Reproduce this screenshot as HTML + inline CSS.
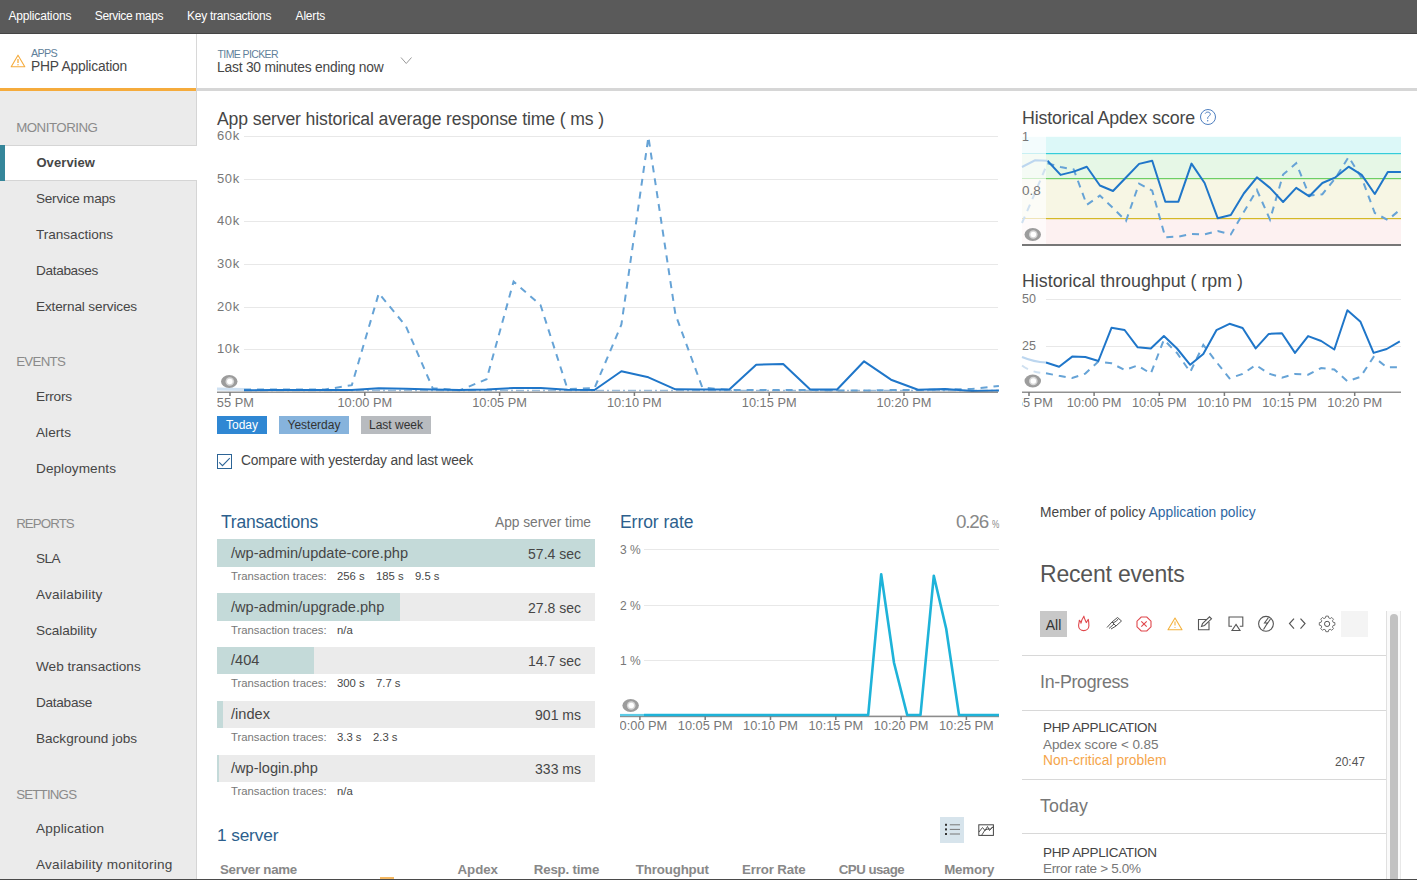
<!DOCTYPE html>
<html><head><meta charset="utf-8">
<style>
*{box-sizing:border-box;margin:0;padding:0}
html,body{width:1417px;height:880px;overflow:hidden;background:#fff;font-family:"Liberation Sans",sans-serif;color:#333}
.t{position:absolute;line-height:1;white-space:nowrap}
.abs{position:absolute}
</style></head><body>
<svg class="abs" style="left:0;top:0" width="1417" height="880" viewBox="0 0 1417 880">
<line x1="244" y1="136.5" x2="998" y2="136.5" stroke="#e8e8e8" stroke-width="1"/>
<line x1="244" y1="179.5" x2="998" y2="179.5" stroke="#e8e8e8" stroke-width="1"/>
<line x1="244" y1="221.5" x2="998" y2="221.5" stroke="#e8e8e8" stroke-width="1"/>
<line x1="244" y1="264.5" x2="998" y2="264.5" stroke="#e8e8e8" stroke-width="1"/>
<line x1="244" y1="307.5" x2="998" y2="307.5" stroke="#e8e8e8" stroke-width="1"/>
<line x1="244" y1="349.5" x2="998" y2="349.5" stroke="#e8e8e8" stroke-width="1"/>
<polyline points="244.0,390.5 271.0,390.5 297.9,390.5 324.9,390.5 351.8,390.5 378.8,390.5 405.8,390.5 432.7,390.5 459.7,390.5 486.6,390.5 513.6,390.5 540.6,390.5 567.5,390.5 594.5,390.5 621.4,390.5 648.4,390.5 675.4,390.5 702.3,390.5 729.3,390.5 756.2,390.5 783.2,390.5 810.2,390.5 837.1,390.5 864.1,390.5 891.0,390.5 918.0,390.5 945.0,390.5 971.9,390.5 998.9,390.5" fill="none" stroke="#9bbbd8" stroke-width="1.5" stroke-dasharray="8,3,2,3"/>
<polyline points="244.0,389.5 271.0,389.5 297.9,389.5 324.9,389.5 351.8,385.2 378.8,293.3 405.8,326.0 432.7,388.2 459.7,390.3 486.6,379.3 513.6,281.5 540.6,305.2 567.5,389.0 594.5,388.2 621.4,324.5 648.4,137.0 675.4,314.3 702.3,387.5 729.3,390.0 756.2,390.0 783.2,390.0 810.2,390.0 837.1,390.5 864.1,390.5 891.0,390.0 918.0,390.0 945.0,389.5 971.9,389.0 998.9,386.0" fill="none" stroke="#66a3d6" stroke-width="2" stroke-dasharray="7,6"/>
<polyline points="244.0,390.3 271.0,390.0 297.9,390.0 324.9,390.0 351.8,390.0 378.8,388.2 405.8,388.8 432.7,389.5 459.7,390.0 486.6,389.5 513.6,388.0 540.6,388.0 567.5,389.7 594.5,390.0 621.4,371.2 648.4,377.3 675.4,389.3 702.3,389.5 729.3,389.5 756.2,364.7 783.2,364.0 810.2,389.5 837.1,389.5 864.1,361.3 891.0,379.7 918.0,389.8 945.0,389.0 971.9,391.0 998.9,390.5" fill="none" stroke="#1f76c9" stroke-width="2" stroke-linejoin="round"/>
<polyline points="217,389 244,389.5" fill="none" stroke="#cfe1f2" stroke-width="3"/>
<rect x="217" y="391.6" width="781" height="1.2" fill="#777"/>
<rect x="229.25" y="392" width="1.5" height="4" fill="#7a7a7a"/>
<rect x="364.05" y="392" width="1.5" height="4" fill="#7a7a7a"/>
<rect x="498.85" y="392" width="1.5" height="4" fill="#7a7a7a"/>
<rect x="633.65" y="392" width="1.5" height="4" fill="#7a7a7a"/>
<rect x="768.45" y="392" width="1.5" height="4" fill="#7a7a7a"/>
<rect x="903.25" y="392" width="1.5" height="4" fill="#7a7a7a"/>
<ellipse cx="229.25" cy="381.5" rx="8.25" ry="6.5" fill="#9c9c9c"/><circle cx="229.8" cy="381.5" r="4.3" fill="#d6d6d6"/><circle cx="229.8" cy="381.5" r="2.8" fill="#fff"/>
<rect x="1046" y="136.8" width="355" height="16.4" fill="#dcf8f8"/>
<rect x="1046" y="153.2" width="355" height="25" fill="#e6f7e6"/>
<rect x="1046" y="178.2" width="355" height="40.2" fill="#f7f6e4"/>
<rect x="1046" y="218.4" width="355" height="25.6" fill="#fdf1f1"/>
<rect x="1022" y="136.8" width="24" height="16.4" fill="#f3fcfd"/>
<rect x="1022" y="153.2" width="24" height="25" fill="#f5fbf5"/>
<rect x="1022" y="178.2" width="24" height="40.2" fill="#fcfcf7"/>
<rect x="1022" y="218.4" width="24" height="25.6" fill="#fefafa"/>
<rect x="1046" y="153" width="355" height="1.2" fill="#34cdda"/>
<rect x="1046" y="178" width="355" height="1.2" fill="#6ccf64"/>
<rect x="1046" y="218" width="355" height="1.2" fill="#d4b926"/>
<rect x="1022" y="153" width="24" height="1" fill="#c8f0f3"/>
<rect x="1022" y="178" width="24" height="1" fill="#cdeec9"/>
<rect x="1022" y="218" width="24" height="1" fill="#eee4b8"/>
<polyline points="1047.5,163.2 1060.6,167.0 1073.7,169.5 1086.8,204.8 1099.9,195.6 1113.0,208.0 1126.0,221.0 1139.1,183.6 1152.2,190.7 1165.3,237.3 1178.4,236.6 1191.5,234.0 1204.6,234.4 1217.7,231.0 1230.8,234.4 1243.8,212.0 1256.9,190.0 1270.0,219.6 1283.1,174.5 1296.2,163.2 1309.3,195.6 1322.4,194.2 1335.5,178.0 1348.6,157.0 1361.7,178.0 1374.8,213.0 1387.8,220.0 1400.9,209.0" fill="none" stroke="#66a3d6" stroke-width="2" stroke-dasharray="7,6"/>
<polyline points="1047.5,160.8 1060.6,174.9 1073.7,171.6 1086.8,166.7 1099.9,185.5 1113.0,191.0 1126.0,177.5 1139.1,163.9 1152.2,160.8 1165.3,201.7 1178.4,201.7 1191.5,163.6 1204.6,183.0 1217.7,218.2 1230.8,215.0 1243.8,193.5 1256.9,177.3 1270.0,187.9 1283.1,202.0 1296.2,187.9 1309.3,196.3 1322.4,183.0 1335.5,177.3 1348.6,166.7 1361.7,174.9 1374.8,194.0 1387.8,172.0 1400.9,172.0" fill="none" stroke="#1f76c9" stroke-width="2" stroke-linejoin="round"/>
<polyline points="1022,167 1035,160.3 1047.5,160.8" fill="none" stroke="#bcd6ef" stroke-width="2"/>
<polyline points="1022,223 1035,193 1047.5,163.2" fill="none" stroke="#cfe0f0" stroke-width="2" stroke-dasharray="7,6"/>
<rect x="1022" y="244" width="379" height="2" fill="#777"/>
<ellipse cx="1032.75" cy="234.5" rx="8.25" ry="6.5" fill="#9c9c9c"/><circle cx="1033.3" cy="234.5" r="4.3" fill="#d6d6d6"/><circle cx="1033.3" cy="234.5" r="2.8" fill="#fff"/>
<line x1="1046" y1="299.5" x2="1401" y2="299.5" stroke="#e8e8e8" stroke-width="1"/>
<line x1="1046" y1="346.5" x2="1401" y2="346.5" stroke="#e8e8e8" stroke-width="1"/>
<polyline points="1046.0,373.3 1059.1,375.8 1072.2,378.0 1085.3,373.6 1098.4,361.5 1111.5,363.3 1124.6,370.0 1137.7,365.5 1150.8,373.6 1163.9,339.7 1177.0,353.0 1190.2,372.0 1203.3,345.0 1216.4,362.0 1229.5,378.4 1242.6,373.9 1255.7,365.0 1268.8,373.6 1281.9,377.6 1295.0,373.9 1308.1,374.7 1321.2,368.0 1334.3,369.5 1347.4,381.3 1360.5,376.9 1373.6,356.9 1386.7,367.2 1399.8,367.2" fill="none" stroke="#66a3d6" stroke-width="2" stroke-dasharray="7,6"/>
<polyline points="1046.0,362.5 1059.1,366.7 1072.2,356.6 1085.3,357.0 1098.4,361.0 1111.5,327.8 1124.6,330.0 1137.7,347.3 1150.8,348.5 1163.9,336.0 1177.0,348.5 1190.2,364.8 1203.3,353.9 1216.4,330.2 1229.5,323.8 1242.6,328.0 1255.7,348.4 1268.8,333.9 1281.9,333.2 1295.0,352.9 1308.1,336.1 1321.2,341.0 1334.3,349.5 1347.4,310.2 1360.5,321.8 1373.6,352.9 1386.7,349.0 1399.8,341.3" fill="none" stroke="#1f76c9" stroke-width="2" stroke-linejoin="round"/>
<path d="M1022,357 Q1034,362 1046,362.5" fill="none" stroke="#bcd6ef" stroke-width="2"/>
<path d="M1022,365.5 Q1032,373 1046,373.3" fill="none" stroke="#cfe0f0" stroke-width="2" stroke-dasharray="7,6"/>
<rect x="1022" y="391.6" width="379" height="1.2" fill="#777"/>
<rect x="1028.25" y="392" width="1.5" height="4" fill="#7a7a7a"/>
<rect x="1093.35" y="392" width="1.5" height="4" fill="#7a7a7a"/>
<rect x="1158.55" y="392" width="1.5" height="4" fill="#7a7a7a"/>
<rect x="1223.65" y="392" width="1.5" height="4" fill="#7a7a7a"/>
<rect x="1288.85" y="392" width="1.5" height="4" fill="#7a7a7a"/>
<rect x="1353.95" y="392" width="1.5" height="4" fill="#7a7a7a"/>
<ellipse cx="1032.75" cy="381.0" rx="8.25" ry="6.5" fill="#9c9c9c"/><circle cx="1033.3" cy="381.0" r="4.3" fill="#d6d6d6"/><circle cx="1033.3" cy="381.0" r="2.8" fill="#fff"/>
<line x1="644" y1="549.5" x2="999" y2="549.5" stroke="#e8e8e8" stroke-width="1"/>
<line x1="644" y1="605.5" x2="999" y2="605.5" stroke="#e8e8e8" stroke-width="1"/>
<line x1="644" y1="660.5" x2="999" y2="660.5" stroke="#e8e8e8" stroke-width="1"/>
<rect x="620" y="715.6" width="379" height="1.6" fill="#8c8c8c"/>
<rect x="639.15" y="716" width="1.5" height="4" fill="#7a7a7a"/>
<rect x="704.45" y="716" width="1.5" height="4" fill="#7a7a7a"/>
<rect x="769.75" y="716" width="1.5" height="4" fill="#7a7a7a"/>
<rect x="835.05" y="716" width="1.5" height="4" fill="#7a7a7a"/>
<rect x="900.35" y="716" width="1.5" height="4" fill="#7a7a7a"/>
<rect x="965.65" y="716" width="1.5" height="4" fill="#7a7a7a"/>
<polyline points="620,715 644,715" fill="none" stroke="#5ccbe6" stroke-width="2.2"/>
<polyline points="644,715 868.2,715 881.2,574.2 894,662.8 907.2,715 920.5,715 933.8,575.7 946.2,628.8 959,715 999,715" fill="none" stroke="#1eb3d9" stroke-width="2.6" stroke-linejoin="round"/>
<ellipse cx="630.65" cy="705.5" rx="8.25" ry="6.5" fill="#9c9c9c"/><circle cx="631.1999999999999" cy="705.5" r="4.3" fill="#d6d6d6"/><circle cx="631.1999999999999" cy="705.5" r="2.8" fill="#fff"/>
</svg>
<div class="abs" style="left:0;top:0;width:1417px;height:33px;background:#5a5a5a"></div>
<div class="abs" style="left:0;top:33px;width:1417px;height:1px;background:#444"></div>
<span class="t" style="left:8.4px;top:10.3px;font-size:12px;color:#fff;;letter-spacing:-0.152px">Applications</span>
<span class="t" style="left:94.8px;top:10.3px;font-size:12px;color:#fff;;letter-spacing:-0.367px">Service maps</span>
<span class="t" style="left:187.1px;top:10.3px;font-size:12px;color:#fff;;letter-spacing:-0.295px">Key transactions</span>
<span class="t" style="left:295.6px;top:10.3px;font-size:12px;color:#fff;;letter-spacing:-0.198px">Alerts</span>
<div class="abs" style="left:196px;top:34px;width:1px;height:54px;background:#d8d8d8"></div>
<div class="abs" style="left:0;top:88px;width:196px;height:3px;background:#f5ab3c"></div>
<div class="abs" style="left:196px;top:88px;width:1221px;height:3px;background:#d6d6d6"></div>
<svg class="abs" style="left:10px;top:54px" width="16" height="14" viewBox="0 0 16 14"><path d="M8 1.2 L14.8 12.8 H1.2 Z" fill="none" stroke="#f5ab3c" stroke-width="1.1" stroke-linejoin="round"/><path d="M8 5 V9" stroke="#f5ab3c" stroke-width="1.3"/><circle cx="8" cy="10.8" r="0.7" fill="#f5ab3c"/></svg>
<span class="t" style="left:31px;top:48.2px;font-size:10.8px;color:#5f7f9a;;letter-spacing:-0.703px">APPS</span>
<span class="t" style="left:31px;top:59.7px;font-size:13.8px;color:#464646;;letter-spacing:-0.179px">PHP Application</span>
<span class="t" style="left:217.5px;top:48.7px;font-size:10.5px;color:#5f7f9a;;letter-spacing:-0.599px">TIME PICKER</span>
<span class="t" style="left:217px;top:60.5px;font-size:13.8px;color:#464646;;letter-spacing:-0.204px">Last 30 minutes ending now</span>
<svg class="abs" style="left:400px;top:56px" width="13" height="9" viewBox="0 0 13 9"><path d="M1 1.5 L6.25 7.5 L11.5 1.5" fill="none" stroke="#9a9a9a" stroke-width="1"/></svg>
<div class="abs" style="left:0;top:91px;width:196px;height:789px;background:#ebebeb"></div>
<div class="abs" style="left:196px;top:91px;width:1px;height:789px;background:#d5d5d5"></div>
<div class="abs" style="left:0;top:145px;width:197px;height:36px;background:#fff;border-top:1px solid #d5d5d5;border-bottom:1px solid #d5d5d5"></div>
<div class="abs" style="left:0;top:145px;width:5px;height:36px;background:#35869a"></div>
<span class="t" style="left:16.2px;top:121.3px;font-size:13.3px;color:#8a8a8a;;letter-spacing:-0.499px">MONITORING</span>
<span class="t" style="left:36.4px;top:155.9px;font-size:13px;color:#464646;font-weight:bold;letter-spacing:0.096px">Overview</span>
<span class="t" style="left:36px;top:191.5px;font-size:13.6px;color:#464646;;letter-spacing:-0.255px">Service maps</span>
<span class="t" style="left:36px;top:227.5px;font-size:13.6px;color:#464646;;letter-spacing:-0.027px">Transactions</span>
<span class="t" style="left:36px;top:263.5px;font-size:13.6px;color:#464646;;letter-spacing:-0.333px">Databases</span>
<span class="t" style="left:36px;top:299.5px;font-size:13.6px;color:#464646;;letter-spacing:-0.147px">External services</span>
<span class="t" style="left:16.2px;top:355.1px;font-size:13.3px;color:#8a8a8a;;letter-spacing:-0.701px">EVENTS</span>
<span class="t" style="left:36px;top:389.8px;font-size:13.6px;color:#464646;;letter-spacing:-0.169px">Errors</span>
<span class="t" style="left:36px;top:425.8px;font-size:13.6px;color:#464646;;letter-spacing:0.042px">Alerts</span>
<span class="t" style="left:36px;top:461.8px;font-size:13.6px;color:#464646;;letter-spacing:0.060px">Deployments</span>
<span class="t" style="left:16.2px;top:517.1px;font-size:13.3px;color:#8a8a8a;;letter-spacing:-0.921px">REPORTS</span>
<span class="t" style="left:36px;top:551.8px;font-size:13.6px;color:#464646;;letter-spacing:-0.568px">SLA</span>
<span class="t" style="left:36px;top:587.8px;font-size:13.6px;color:#464646;;letter-spacing:0.201px">Availability</span>
<span class="t" style="left:36px;top:623.8px;font-size:13.6px;color:#464646;;letter-spacing:-0.037px">Scalability</span>
<span class="t" style="left:36px;top:659.8px;font-size:13.6px;color:#464646;;letter-spacing:-0.005px">Web transactions</span>
<span class="t" style="left:36px;top:695.8px;font-size:13.6px;color:#464646;;letter-spacing:-0.275px">Database</span>
<span class="t" style="left:36px;top:731.8px;font-size:13.6px;color:#464646;;letter-spacing:-0.018px">Background jobs</span>
<span class="t" style="left:16.2px;top:787.5px;font-size:13.3px;color:#8a8a8a;;letter-spacing:-0.812px">SETTINGS</span>
<span class="t" style="left:36px;top:822.1px;font-size:13.6px;color:#464646;;letter-spacing:0.162px">Application</span>
<span class="t" style="left:36px;top:857.8px;font-size:13.6px;color:#464646;;letter-spacing:0.234px">Availability monitoring</span>
<span class="t" style="left:217px;top:110.7px;font-size:17.6px;color:#464646;;letter-spacing:-0.122px">App server historical average response time ( ms )</span>
<span class="t" style="left:217px;top:128.9px;font-size:13px;color:#777;letter-spacing:0.6px">60k</span>
<span class="t" style="left:217px;top:171.6px;font-size:13px;color:#777;letter-spacing:0.6px">50k</span>
<span class="t" style="left:217px;top:214.2px;font-size:13px;color:#777;letter-spacing:0.6px">40k</span>
<span class="t" style="left:217px;top:256.9px;font-size:13px;color:#777;letter-spacing:0.6px">30k</span>
<span class="t" style="left:217px;top:299.6px;font-size:13px;color:#777;letter-spacing:0.6px">20k</span>
<span class="t" style="left:217px;top:342.2px;font-size:13px;color:#777;letter-spacing:0.6px">10k</span>
<div class="abs" style="left:217px;top:395px;width:800px;height:20px;overflow:hidden">
<span class="t" style="left:13px;transform:translateX(-50%);top:1.8px;font-size:12.8px;color:#777;">9:55 PM</span>
<span class="t" style="left:147.8px;transform:translateX(-50%);top:1.8px;font-size:12.8px;color:#777;">10:00 PM</span>
<span class="t" style="left:282.6px;transform:translateX(-50%);top:1.8px;font-size:12.8px;color:#777;">10:05 PM</span>
<span class="t" style="left:417.4px;transform:translateX(-50%);top:1.8px;font-size:12.8px;color:#777;">10:10 PM</span>
<span class="t" style="left:552.2px;transform:translateX(-50%);top:1.8px;font-size:12.8px;color:#777;">10:15 PM</span>
<span class="t" style="left:687px;transform:translateX(-50%);top:1.8px;font-size:12.8px;color:#777;">10:20 PM</span>
</div>
<div class="abs" style="left:217px;top:416px;width:50px;height:18px;background:#2f87d3"></div>
<span class="t" style="left:242px;transform:translateX(-50%);top:419.2px;font-size:12px;color:#fff;">Today</span>
<div class="abs" style="left:279px;top:416px;width:70px;height:18px;background:#86b3dc"></div>
<span class="t" style="left:314px;transform:translateX(-50%);top:419.2px;font-size:12px;color:#333;">Yesterday</span>
<div class="abs" style="left:361px;top:416px;width:70px;height:18px;background:#b8bbbf"></div>
<span class="t" style="left:396px;transform:translateX(-50%);top:419.2px;font-size:12px;color:#333;">Last week</span>
<div class="abs" style="left:217px;top:454px;width:15px;height:15px;border:1px solid #2c6496;background:#fff"></div>
<svg class="abs" style="left:217px;top:454px" width="15" height="15" viewBox="0 0 15 15"><path d="M2.2 8.3 L5.5 11.6 L12.8 4.2" fill="none" stroke="#2c6496" stroke-width="1.1"/></svg>
<span class="t" style="left:241px;top:453.7px;font-size:13.8px;color:#464646;;letter-spacing:-0.138px">Compare with yesterday and last week</span>
<span class="t" style="left:1022px;top:110.3px;font-size:17.8px;color:#464646;;letter-spacing:-0.133px">Historical Apdex score</span>
<svg class="abs" style="left:1199px;top:108px" width="18" height="18" viewBox="0 0 18 18"><circle cx="9" cy="9" r="7.5" fill="none" stroke="#4f7fc0" stroke-width="1"/><path d="M6.2 5.6 C6.6 4.6 7.6 4.1 8.8 4.1 C10.3 4.1 11.3 5 11.3 6.2 C11.3 7.6 9.8 8 9 9 C8.7 9.4 8.7 10 8.7 10.8" fill="none" stroke="#4f7fc0" stroke-width="1"/><circle cx="8.7" cy="12.7" r="0.7" fill="#4f7fc0"/></svg>
<span class="t" style="left:1022px;top:130.8px;font-size:12.5px;color:#777;">1</span>
<span class="t" style="left:1022px;top:184.4px;font-size:13.5px;color:#777;">0.8</span>
<span class="t" style="left:1022px;top:272.8px;font-size:17.8px;color:#464646;;letter-spacing:0.022px">Historical throughput ( rpm )</span>
<span class="t" style="left:1022px;top:292.5px;font-size:12.5px;color:#777;">50</span>
<span class="t" style="left:1022px;top:339.8px;font-size:12.5px;color:#777;">25</span>
<div class="abs" style="left:1022px;top:395px;width:380px;height:20px;overflow:hidden">
<span class="t" style="left:7px;transform:translateX(-50%);top:1.8px;font-size:12.8px;color:#777;">9:55 PM</span>
<span class="t" style="left:72.09999999999991px;transform:translateX(-50%);top:1.8px;font-size:12.8px;color:#777;">10:00 PM</span>
<span class="t" style="left:137.29999999999995px;transform:translateX(-50%);top:1.8px;font-size:12.8px;color:#777;">10:05 PM</span>
<span class="t" style="left:202.4000000000001px;transform:translateX(-50%);top:1.8px;font-size:12.8px;color:#777;">10:10 PM</span>
<span class="t" style="left:267.5999999999999px;transform:translateX(-50%);top:1.8px;font-size:12.8px;color:#777;">10:15 PM</span>
<span class="t" style="left:332.70000000000005px;transform:translateX(-50%);top:1.8px;font-size:12.8px;color:#777;">10:20 PM</span>
</div>
<span class="t" style="left:221px;top:513.5px;font-size:17.5px;color:#2d5f8d;;letter-spacing:-0.211px">Transactions</span>
<span class="t" style="left:495px;top:515.7px;font-size:13.8px;color:#777;;letter-spacing:-0.042px">App server time</span>
<div class="abs" style="left:217px;top:539px;width:378px;height:28px;background:#ebebeb"></div>
<div class="abs" style="left:217px;top:539px;width:378px;height:28px;background:#c4dad9"></div>
<span class="t" style="left:231px;top:546.3px;font-size:14.6px;color:#464646;;letter-spacing:-0.027px">/wp-admin/update-core.php</span>
<span class="t" style="right:836px;top:546.8px;font-size:14px;color:#464646;">57.4 sec</span>
<span class="t" style="left:231px;top:570.8px;font-size:11.3px;color:#777;">Transaction traces:</span>
<span class="t" style="left:337px;top:570.8px;font-size:11.3px;color:#464646;">256 s</span>
<span class="t" style="left:376px;top:570.8px;font-size:11.3px;color:#464646;">185 s</span>
<span class="t" style="left:415px;top:570.8px;font-size:11.3px;color:#464646;">9.5 s</span>
<div class="abs" style="left:217px;top:593px;width:378px;height:28px;background:#ebebeb"></div>
<div class="abs" style="left:217px;top:593px;width:183px;height:28px;background:#c4dad9"></div>
<span class="t" style="left:231px;top:600.3px;font-size:14.6px;color:#464646;">/wp-admin/upgrade.php</span>
<span class="t" style="right:836px;top:600.8px;font-size:14px;color:#464646;">27.8 sec</span>
<span class="t" style="left:231px;top:624.8px;font-size:11.3px;color:#777;">Transaction traces:</span>
<span class="t" style="left:337px;top:624.8px;font-size:11.3px;color:#464646;">n/a</span>
<div class="abs" style="left:217px;top:647px;width:378px;height:27px;background:#ebebeb"></div>
<div class="abs" style="left:217px;top:647px;width:97px;height:27px;background:#c4dad9"></div>
<span class="t" style="left:231px;top:653.3px;font-size:14.6px;color:#464646;">/404</span>
<span class="t" style="right:836px;top:653.8px;font-size:14px;color:#464646;">14.7 sec</span>
<span class="t" style="left:231px;top:677.8px;font-size:11.3px;color:#777;">Transaction traces:</span>
<span class="t" style="left:337px;top:677.8px;font-size:11.3px;color:#464646;">300 s</span>
<span class="t" style="left:376px;top:677.8px;font-size:11.3px;color:#464646;">7.7 s</span>
<div class="abs" style="left:217px;top:701px;width:378px;height:27px;background:#ebebeb"></div>
<div class="abs" style="left:217px;top:701px;width:6px;height:27px;background:#c4dad9"></div>
<span class="t" style="left:231px;top:707.3px;font-size:14.6px;color:#464646;">/index</span>
<span class="t" style="right:836px;top:707.8px;font-size:14px;color:#464646;">901 ms</span>
<span class="t" style="left:231px;top:731.8px;font-size:11.3px;color:#777;">Transaction traces:</span>
<span class="t" style="left:337px;top:731.8px;font-size:11.3px;color:#464646;">3.3 s</span>
<span class="t" style="left:373px;top:731.8px;font-size:11.3px;color:#464646;">2.3 s</span>
<div class="abs" style="left:217px;top:755px;width:378px;height:27px;background:#ebebeb"></div>
<div class="abs" style="left:217px;top:755px;width:2px;height:27px;background:#c4dad9"></div>
<span class="t" style="left:231px;top:761.3px;font-size:14.6px;color:#464646;">/wp-login.php</span>
<span class="t" style="right:836px;top:761.8px;font-size:14px;color:#464646;">333 ms</span>
<span class="t" style="left:231px;top:785.8px;font-size:11.3px;color:#777;">Transaction traces:</span>
<span class="t" style="left:337px;top:785.8px;font-size:11.3px;color:#464646;">n/a</span>
<span class="t" style="left:620px;top:513.9px;font-size:17.5px;color:#2d5f8d;;letter-spacing:-0.051px">Error rate</span>
<span class="t" style="left:955.9px;top:513.2px;font-size:18.8px;color:#888;;letter-spacing:-1.091px">0.26</span>
<span class="t" style="left:991.5px;top:519.2px;font-size:11px;color:#888;transform:scaleX(0.75);transform-origin:left">%</span>
<span class="t" style="left:620px;top:543.7px;font-size:12px;color:#777;">3 %</span>
<span class="t" style="left:620px;top:599.9px;font-size:12px;color:#777;">2 %</span>
<span class="t" style="left:620px;top:655.2px;font-size:12px;color:#777;">1 %</span>
<div class="abs" style="left:620px;top:719px;width:380px;height:20px;overflow:hidden">
<span class="t" style="left:19.899999999999977px;transform:translateX(-50%);top:1.3px;font-size:12.8px;color:#777;">10:00 PM</span>
<span class="t" style="left:85.20000000000005px;transform:translateX(-50%);top:1.3px;font-size:12.8px;color:#777;">10:05 PM</span>
<span class="t" style="left:150.5px;transform:translateX(-50%);top:1.3px;font-size:12.8px;color:#777;">10:10 PM</span>
<span class="t" style="left:215.79999999999995px;transform:translateX(-50%);top:1.3px;font-size:12.8px;color:#777;">10:15 PM</span>
<span class="t" style="left:281.1px;transform:translateX(-50%);top:1.3px;font-size:12.8px;color:#777;">10:20 PM</span>
<span class="t" style="left:346.4px;transform:translateX(-50%);top:1.3px;font-size:12.8px;color:#777;">10:25 PM</span>
</div>
<span class="t" style="left:217px;top:826.8px;font-size:17.3px;color:#2d5f8d;;letter-spacing:-0.142px">1 server</span>
<div class="abs" style="left:940px;top:817px;width:24px;height:26px;background:#d7e4ec"></div>
<svg class="abs" style="left:942px;top:821px" width="20" height="18" viewBox="0 0 20 18"><g fill="#333"><rect x="3" y="2.8" width="2" height="2"/><rect x="3" y="7.4" width="2" height="2"/><rect x="3" y="12" width="2" height="2"/></g><g stroke="#777" stroke-width="1"><line x1="7.8" y1="3.8" x2="18" y2="3.8"/><line x1="7.8" y1="8.4" x2="18" y2="8.4"/><line x1="7.8" y1="13" x2="18" y2="13"/></g></svg>
<svg class="abs" style="left:976px;top:821px" width="20" height="16" viewBox="0 0 20 16"><rect x="2.8" y="3.8" width="14.6" height="10.6" fill="none" stroke="#444" stroke-width="1"/><path d="M3 11 L6.5 6.5 L9 9.5 L11.5 5.5 L13.5 9.5 L16.5 6 L17.5 7" fill="none" stroke="#444" stroke-width="0.9"/><path d="M5.5 14.5 L9 9 L12 8 L14.5 8 L17.4 5.5" fill="none" stroke="#444" stroke-width="0.9"/></svg>
<span class="t" style="left:220px;top:863.4px;font-size:13.3px;color:#888;font-weight:bold;letter-spacing:-0.259px">Server name</span>
<span class="t" style="left:457.5px;top:863.4px;font-size:13.3px;color:#888;font-weight:bold;letter-spacing:-0.048px">Apdex</span>
<span class="t" style="left:533.75px;top:863.4px;font-size:13.3px;color:#888;font-weight:bold;letter-spacing:-0.185px">Resp. time</span>
<span class="t" style="left:635.8px;top:863.4px;font-size:13.3px;color:#888;font-weight:bold;letter-spacing:-0.159px">Throughput</span>
<span class="t" style="left:742px;top:863.4px;font-size:13.3px;color:#888;font-weight:bold;letter-spacing:-0.163px">Error Rate</span>
<span class="t" style="left:838.75px;top:863.4px;font-size:13.3px;color:#888;font-weight:bold;letter-spacing:-0.534px">CPU usage</span>
<span class="t" style="left:944.2px;top:863.4px;font-size:13.3px;color:#888;font-weight:bold;letter-spacing:-0.167px">Memory</span>
<div class="abs" style="left:380px;top:877px;width:14px;height:2px;background:#f5b862"></div>
<span class="t" style="left:1040px;top:505.9px;font-size:13.8px;color:#464646;;letter-spacing:0.025px">Member of policy <span style="color:#2e67a2">Application policy</span></span>
<span class="t" style="left:1040px;top:563.4px;font-size:23px;color:#555;;letter-spacing:-0.187px">Recent events</span>
<div class="abs" style="left:1040px;top:611px;width:27px;height:26px;background:#c8c8c8"></div>
<span class="t" style="left:1053.5px;transform:translateX(-50%);top:617.5px;font-size:14px;color:#333;">All</span>
<div class="abs" style="left:1341px;top:611px;width:27px;height:26px;background:#f4f4f4"></div>
<div class="abs" style="left:1022px;top:655px;width:364px;height:1px;background:#d8d8d8"></div>
<span class="t" style="left:1040px;top:674.1px;font-size:17.8px;color:#777;;letter-spacing:-0.291px">In-Progress</span>
<div class="abs" style="left:1022px;top:710px;width:364px;height:1px;background:#d8d8d8"></div>
<span class="t" style="left:1043px;top:720.6px;font-size:13.5px;color:#444;;letter-spacing:-0.340px">PHP APPLICATION</span>
<span class="t" style="left:1043px;top:737.8px;font-size:13.5px;color:#777;;letter-spacing:-0.072px">Apdex score &lt; 0.85</span>
<span class="t" style="left:1043px;top:754.2px;font-size:13.8px;color:#f5a54a;;letter-spacing:0.046px">Non-critical problem</span>
<span class="t" style="right:52px;top:755.7px;font-size:12px;color:#555;">20:47</span>
<div class="abs" style="left:1022px;top:779px;width:364px;height:1px;background:#d8d8d8"></div>
<span class="t" style="left:1040px;top:797.8px;font-size:17.8px;color:#777;;letter-spacing:0.109px">Today</span>
<div class="abs" style="left:1022px;top:833px;width:364px;height:1px;background:#d8d8d8"></div>
<span class="t" style="left:1043px;top:845.5px;font-size:13.5px;color:#444;;letter-spacing:-0.340px">PHP APPLICATION</span>
<span class="t" style="left:1043px;top:862.2px;font-size:13.5px;color:#777;;letter-spacing:-0.328px">Error rate &gt; 5.0%</span>
<div class="abs" style="left:1386px;top:611px;width:1px;height:269px;background:#e0e0e0"></div>
<div class="abs" style="left:1400px;top:611px;width:1px;height:269px;background:#e8e8e8"></div>
<div class="abs" style="left:1387px;top:611px;width:13px;height:269px;background:#fafafa"></div>
<div class="abs" style="left:1390px;top:613.5px;width:8px;height:270px;background:#c2c2c2;border-radius:4px"></div>

<svg class="abs" style="left:1070px;top:608px" width="310" height="32" viewBox="1070 608 310 32">
 <g fill="none" stroke="#e0474c" stroke-width="1.1" stroke-linejoin="round">
  <path d="M1083.7 630.6 C1080.7 630.6 1078.6 628.5 1078.6 625.8 C1078.6 623.6 1079.4 622 1079.3 620.3 C1080.4 621 1080.9 622 1081 623.2 C1081.4 620.6 1082.5 618.3 1083.9 616.2 C1084.1 618.6 1085.5 620.5 1086.3 622.6 C1086.9 621.6 1087.6 620.4 1088.3 619.4 C1088.7 621.2 1088.9 623.6 1088.9 625.8 C1088.9 628.5 1086.7 630.6 1083.7 630.6 Z"/>
 </g>
 <g fill="none" stroke="#555" stroke-width="1">
  <path d="M1112 622 L1117.5 617.5 L1121.5 621 L1116 626 Z"/>
  <path d="M1113 623 L1116.5 621 L1118 619"/>
  <path d="M1112 622 L1107 627.5 M1114 624 L1109 628.5 M1116 626 L1111 629"/>
 </g>
 <g fill="none" stroke="#e0474c" stroke-width="1.1">
  <path d="M1141.2 617 H1146.8 L1151 621.2 V626.8 L1146.8 631 H1141.2 L1137 626.8 V621.2 Z"/>
  <path d="M1141.3 621.3 L1146.7 626.7 M1146.7 621.3 L1141.3 626.7"/>
 </g>
 <g fill="none" stroke="#f4b23e" stroke-width="1.1" stroke-linejoin="round">
  <path d="M1175 618 L1182 629.7 H1168 Z"/>
  <path d="M1175 621.5 V625.5"/>
 </g>
 <circle cx="1175" cy="627.5" r="0.6" fill="#f4b23e"/>
 <g fill="none" stroke="#555" stroke-width="1.1">
  <path d="M1207 619.5 H1198.5 V629.7 H1209 V622"/>
  <path d="M1201.5 626.5 L1202.5 623.5 L1209.5 616.8 L1211.5 618.8 L1204.5 625.5 Z"/>
 </g>
 <g fill="none" stroke="#555" stroke-width="1.1">
  <path d="M1232 626.3 H1229 V617 H1242.8 V626.3 H1239.8"/>
  <path d="M1236 624.4 L1240 630.5 H1232 Z"/>
 </g>
 <g fill="none" stroke="#555" stroke-width="1.1">
  <circle cx="1266" cy="623.8" r="7.4"/>
  <path d="M1268.5 617.5 L1264.5 623 H1267.5 L1263.5 629.5"/>
  <path d="M1270.5 619 L1267 624"/>
 </g>
 <g fill="none" stroke="#555" stroke-width="1.2">
  <path d="M1294 618.6 L1289.5 623.6 L1294 628.6"/>
  <path d="M1300.5 618.6 L1305 623.6 L1300.5 628.6"/>
 </g>
 <g fill="none" stroke="#555" stroke-width="1">
  <path d="M1325.6 616.2 L1328.6 616.2 L1329.1 618.4 L1330.9 619.2 L1332.8 617.9 L1334.9 620 L1333.6 621.9 L1334.4 623.7 L1336.6 624.2 L1336.6 627.2 L1334.4 627.7 L1333.6 629.5 L1334.9 631.4 L1332.8 633.5 L1330.9 632.2 L1329.1 633 L1328.6 635.2 L1325.6 635.2 L1325.1 633 L1323.3 632.2 L1321.4 633.5 L1319.3 631.4 L1320.6 629.5 L1319.8 627.7 L1317.6 627.2 L1317.6 624.2 L1319.8 623.7 L1320.6 621.9 L1319.3 620 L1321.4 617.9 L1323.3 619.2 L1325.1 618.4 Z" transform="translate(1327.1 623.9) scale(0.82) translate(-1327.1 -625.7)"/>
  <circle cx="1327.1" cy="623.9" r="2.6"/>
 </g>
</svg>
<div class="abs" style="left:0;top:879px;width:1417px;height:1px;background:#4a4a4a"></div>
</body></html>
